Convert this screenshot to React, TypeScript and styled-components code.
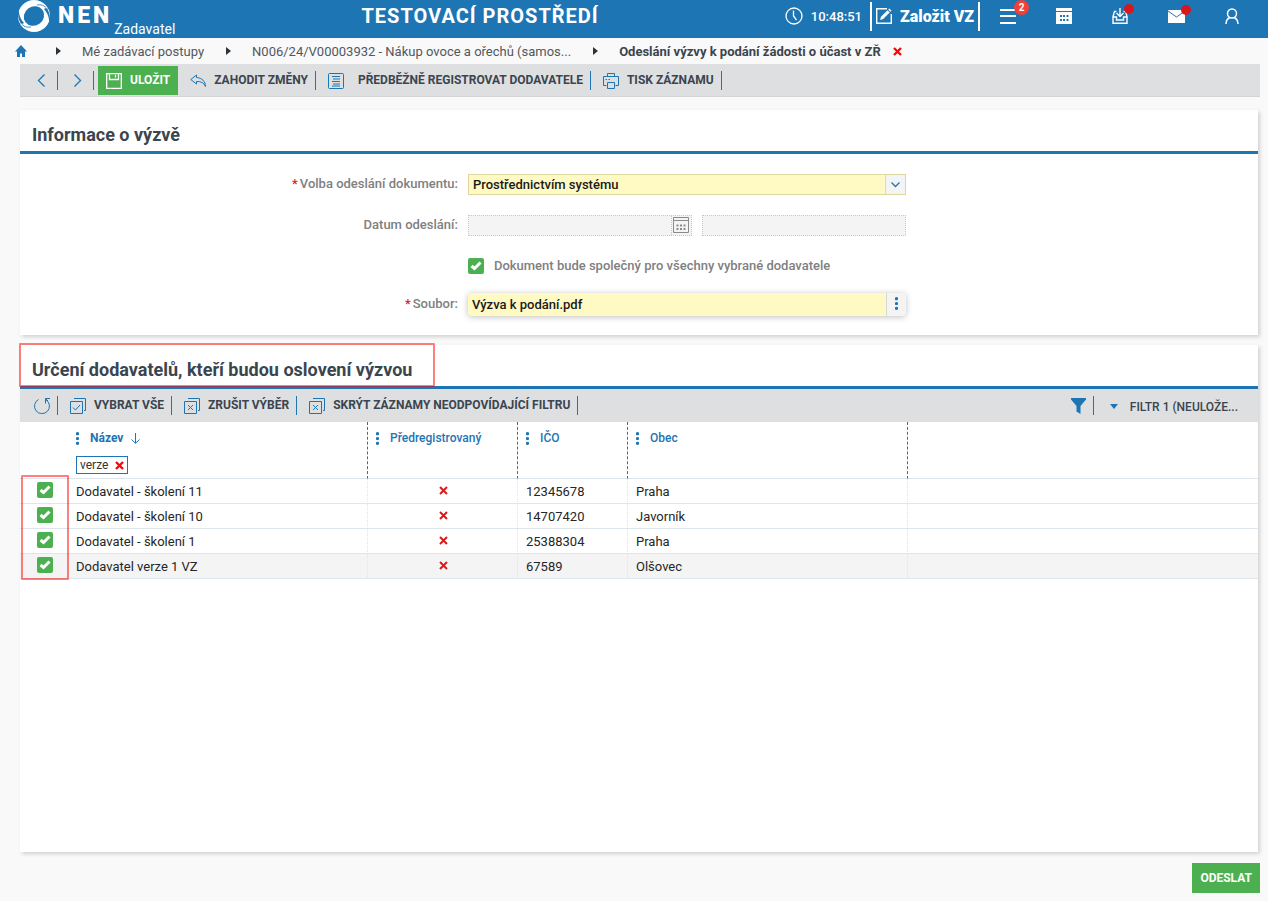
import React from "react";
import styled, { createGlobalStyle } from "styled-components";

const blue = "#1d75b4";
const green = "#4caf50";
const ink = "#3b454e";
const line = "#dde6ec";

const GlobalStyle = createGlobalStyle`
  *, *::before, *::after { box-sizing: border-box; }
  body { margin: 0; background: #f9f9f9; color: #333; font-family: Roboto, "Liberation Sans", sans-serif; font-size: 13px; }
  button, input, select { font-family: inherit; }
  svg { display: block; flex: none; }
`;

const Page = styled.div`
  display: flex;
  flex-direction: column;
  min-height: 100vh;
`;

/* ---------- top bar ---------- */

const TopBar = styled.header`
  display: flex;
  align-items: center;
  height: 38px;
  padding: 0 8px 6px 18px;
  background: ${blue};
  color: #fff;
`;

const Brand = styled.a`
  display: flex;
  align-items: center;
  gap: 8px;
  color: #fff;
  text-decoration: none;
`;

const BrandName = styled.span`
  font-size: 23px;
  font-weight: 900;
  line-height: 32px;
  letter-spacing: 3px;
`;

const BrandRole = styled.span`
  align-self: flex-end;
  margin: 0 0 -6px -6px;
  font-size: 14px;
  line-height: 17px;
`;

const EnvTitle = styled.h1`
  flex: 1;
  margin: 0;
  font-size: 20px;
  font-weight: 700;
  line-height: 32px;
  letter-spacing: 1px;
  text-align: center;
  white-space: nowrap;
`;

const Clock = styled.div`
  display: flex;
  align-items: center;
  gap: 8px;
  margin-right: 8px;
  font-size: 13px;
  font-weight: 500;
`;

const CreateButton = styled.button`
  display: flex;
  align-items: center;
  gap: 8px;
  height: 29px;
  padding: 0 4px;
  border: solid #fff;
  border-width: 0 2px;
  background: none;
  color: #fff;
  font-size: 16px;
  font-weight: 900;
  white-space: nowrap;
`;

const TopIcon = styled.button`
  display: flex;
  justify-content: center;
  width: 56px;
  padding: 0;
  border: 0;
  background: none;
  color: #fff;
`;

const IconHolder = styled.span`
  position: relative;
`;

const Badge = styled.span`
  position: absolute;
  top: -8px;
  left: 14px;
  width: 15px;
  height: 15px;
  border-radius: 50%;
  background: #f43f36;
  font-size: 10px;
  font-weight: 700;
  line-height: 15px;
  text-align: center;
`;

const Dot = styled.span`
  position: absolute;
  top: -4px;
  right: -6px;
  width: 10px;
  height: 10px;
  border-radius: 50%;
  background: #d9161c;
`;

/* ---------- breadcrumb ---------- */

const Crumbs = styled.nav`
  display: flex;
  align-items: center;
  gap: 21px;
  height: 26px;
  padding-left: 15px;
  color: #50585f;
  white-space: nowrap;
`;

const CrumbLink = styled.a`
  padding-right: 1px;
  color: inherit;
  text-decoration: none;
`;

const HomeLink = styled(CrumbLink)`
  margin-right: 7px;
  color: ${blue};
`;

const Current = styled.span`
  display: flex;
  align-items: center;
  gap: 12px;
  color: ${ink};
  font-weight: 700;
`;

const PlainButton = styled.button`
  display: flex;
  padding: 0;
  border: 0;
  background: none;
`;

/* ---------- toolbars ---------- */

const ToolBar = styled.div<{ $page?: boolean }>`
  display: flex;
  align-items: center;
  height: 33px;
  margin: ${(p) => (p.$page ? "0 8px 13px 20px" : "0")};
  padding: 1px 0 0 2px;
  border-bottom: 1px solid ${(p) => (p.$page ? "#d4d5d7" : "#dedfe1")};
  background: #dedfe1;
`;

const Tool = styled.button<{ $gap?: number }>`
  display: flex;
  align-items: center;
  gap: ${(p) => p.$gap ?? 8}px;
  height: 29px;
  padding: 0 7px 0 12px;
  border: 0;
  background: none;
  color: ${ink};
  font-size: 12px;
  font-weight: 700;
  white-space: nowrap;
`;

const NavTool = styled(Tool)`
  justify-content: center;
  width: 35px;
  padding: 0 0 0 4px;
`;

const SaveTool = styled(Tool)`
  margin-left: 4px;
  padding: 0 8px;
  background: ${green};
  color: #fff;
`;

const Label = styled.span`
  margin-bottom: 2px;
`;

const Divider = styled.span`
  width: 1px;
  height: 19px;
  background: ${blue};
`;

const FilterTools = styled.div`
  display: flex;
  align-items: center;
  margin-left: auto;
  padding-right: 13px;
`;

const FilterPick = styled(Tool)`
  gap: 12px;
  padding: 2px 7px 0 16px;
  font-weight: 500;
`;

/* ---------- panels ---------- */

const Panel = styled.section<{ $grow?: boolean }>`
  flex: ${(p) => (p.$grow ? "1" : "none")};
  margin: 0 10px ${(p) => (p.$grow ? 11 : 10)}px 20px;
  background: #fff;
  box-shadow: 2px 2px 4px rgba(0, 0, 0, 0.16);
`;

const PanelTitle = styled.h2`
  position: relative;
  margin: 0;
  padding: 13px 12px 4px;
  border-bottom: 3px solid ${blue};
  color: ${ink};
  font-size: 18px;
  font-weight: 700;
  line-height: 24px;
`;

const TitleMark = styled.span`
  position: absolute;
  top: -2px;
  left: -1px;
  width: 416px;
  height: 44px;
  border: 2px solid rgba(255, 0, 0, 0.5);
  border-radius: 1px;
`;

/* ---------- form ---------- */

const Form = styled.form`
  padding-bottom: 19px;
`;

const FormRow = styled.div<{ $gap?: number }>`
  display: grid;
  grid-template-columns: 32fr 32fr 25fr;
  column-gap: 10px;
  align-items: center;
  min-height: 21px;
  margin-top: ${(p) => p.$gap ?? 20}px;
`;

const FieldLabel = styled.label`
  padding-bottom: 2px;
  color: #808080;
  font-weight: 500;
  line-height: 19px;
  text-align: right;
`;

const Required = styled.span`
  margin-right: 2px;
  color: #e0201f;
`;

const SelectBox = styled.div`
  display: flex;
  height: 21px;
  border: 1px solid #dcd6a0;
  background: #fff9c4;
`;

const Select = styled.select`
  flex: 1;
  min-width: 0;
  padding: 0 4px;
  border: 0;
  appearance: none;
  background: none;
  color: #1a1a1a;
  font-size: 13px;
  font-weight: 500;
`;

const EndCap = styled.span`
  display: flex;
  align-items: center;
  justify-content: center;
  width: 20px;
  border-left: 1px solid #d8d8d8;
  background: #f4f4f4;
`;

const DateFields = styled.div`
  display: grid;
  grid-template-columns: 11fr 10fr;
  gap: 10px;
  height: 21px;
`;

const DateBox = styled.div`
  display: flex;
  border: 1px dotted #c8c8c8;
  background: #f4f4f4;
`;

const PlainInput = styled.input`
  flex: 1;
  min-width: 0;
  padding: 0 4px;
  border: 0;
  background: none;
  color: #1a1a1a;
  font-size: 13px;
  font-weight: 500;
`;

const TimeInput = styled(PlainInput)`
  border: 1px dotted #c8c8c8;
  background: #f4f4f4;
`;

const DateButton = styled(PlainButton)`
  align-items: center;
  padding: 0 2px 1px 1px;
  border-left: 1px dotted #c8c8c8;
`;

const CheckLabel = styled.label`
  display: flex;
  grid-column: 2;
  align-items: center;
  gap: 10px;
  padding-bottom: 2px;
  color: #808080;
  font-weight: 500;
`;

const Check = styled.input`
  width: 16px;
  height: 16px;
  margin: 0;
  border-radius: 2px;
  appearance: none;
  background: ${green};
`;

const CheckHolder = styled.span`
  display: grid;
  width: 16px;
  height: 16px;
  & > * { grid-area: 1 / 1; }
  & > svg { pointer-events: none; z-index: 1; }
`;

const FileBox = styled.div`
  display: flex;
  height: 23px;
  overflow: hidden;
  border-radius: 4px;
  background: #fff9c4;
  box-shadow: 0 1px 6px rgba(0, 0, 0, 0.25);
`;

const MoreButton = styled(PlainButton)`
  align-items: center;
  justify-content: center;
  width: 20px;
  padding-bottom: 2px;
  border-left: 1px solid #d8d8d8;
  background: #f4f4f4;
`;

/* ---------- table ---------- */

const TableArea = styled.div`
  position: relative;
`;

const Table = styled.table`
  width: 100%;
  table-layout: fixed;
  border-collapse: separate;
  border-spacing: 0;
`;

const HeadCell = styled.th<{ $edge?: boolean }>`
  height: 57px;
  padding: 8px 8px 4px;
  border-right: ${(p) => (p.$edge ? `1px dashed ${blue}` : "0")};
  border-bottom: 1px solid ${line};
  color: ${blue};
  font-size: 12px;
  font-weight: 500;
  line-height: 16px;
  text-align: left;
  vertical-align: top;
`;

const HeadLabel = styled.span<{ $sorted?: boolean }>`
  display: flex;
  align-items: center;
  gap: ${(p) => (p.$sorted ? 8 : 11)}px;
  font-weight: ${(p) => (p.$sorted ? 700 : 500)};
`;

const HeadText = styled.span<{ $sorted?: boolean }>`
  margin-left: ${(p) => (p.$sorted ? 3 : 0)}px;
`;

const Chip = styled.span`
  display: flex;
  align-items: center;
  gap: 7px;
  width: fit-content;
  height: 18px;
  margin-top: 10px;
  padding: 0 3px;
  border: 1px solid ${blue};
  color: #333;
  font-weight: 400;
`;

const Row = styled.tr<{ $active?: boolean }>`
  background: ${(p) => (p.$active ? "#f4f4f4" : "#fff")};
`;

const Cell = styled.td<{ $edge?: boolean }>`
  height: 25px;
  padding: 1px 8px 0;
  border-right: ${(p) => (p.$edge ? "1px dotted #dfe4e8" : "0")};
  border-bottom: 1px solid ${line};
  color: #262626;
  line-height: 16px;
`;

const CheckCell = styled(Cell)`
  padding: 0 0 2px 17px;
`;

const MarkCell = styled(Cell)`
  padding: 0 0 2px 2px;
  & > svg { margin: 0 auto; }
`;

const CheckMark = styled.span`
  position: absolute;
  top: 53px;
  left: 1px;
  width: 48px;
  height: 105px;
  border: 2px solid rgba(255, 0, 0, 0.5);
  border-radius: 1px;
  pointer-events: none;
`;

const Footer = styled.footer`
  display: flex;
  justify-content: flex-end;
  padding: 0 8px 8px;
`;

const SubmitButton = styled.button`
  height: 30px;
  padding: 0 8px;
  border: 0;
  background: ${green};
  color: #fff;
  font-size: 12px;
  font-weight: 700;
`;

/* ---------- drawings ---------- */

const Svg = ({ w = 16, h = 16, stroke = blue, sw = 1, children }: { w?: number; h?: number; stroke?: string; sw?: number; children: React.ReactNode }) => (
  <svg width={w} height={h} viewBox={`0 0 ${w} ${h}`} fill="none" stroke={stroke} strokeWidth={sw} aria-hidden="true">
    {children}
  </svg>
);

const Cross = ({ color = "#f80808", sw = 2.4 }) => (
  <Svg w={9} h={9} stroke={color} sw={sw}>
    <path d="M1 1L8 8M8 1L1 8" />
  </Svg>
);

const Dots = () => (
  <Svg w={3} h={13} stroke="none">
    <g fill={blue}>
      <circle cx="1.5" cy="1.7" r="1.6" />
      <circle cx="1.5" cy="6.5" r="1.6" />
      <circle cx="1.5" cy="11.3" r="1.6" />
    </g>
  </Svg>
);

const Tri = () => (
  <Svg w={5} h={8} stroke="none">
    <path d="M0 0L5 4L0 8Z" fill="#2c343b" />
  </Svg>
);

const Logo = () => (
  <Svg w={32} h={32} stroke="none">
    <circle cx="16" cy="16" r="16" fill="#fff" />
    <ellipse cx="16" cy="16" rx="10.5" ry="9.5" transform="rotate(-35 16 16)" fill={blue} />
    <path d="M.5 10C1.500 16 2.500 19 6 23L4 24C1 21 0 18 0 12ZM31.500 22C30.500 16 29.500 13 26 9L28 8C31 11 32 14 32 20Z" fill={blue} />
    <path d="M19 5C25 4 28 7 30 10M13 27C7 28 4 25 2 22" fill="none" stroke={blue} strokeWidth=".8" />
  </Svg>
);

const Copies = ({ tick }: { tick?: boolean }) => (
  <Svg>
    <path d="M.5 3.500H12.500V15.500H.5Z" />
    <path d="M4 .500H15.500V12.500H14" />
    <path d={tick ? "M3 9.500L5.500 12L10 7" : "M4 7L9 12M9 7L4 12"} />
  </Svg>
);

const CheckBox = ({ id, label }: { id: string; label?: string }) => (
  <CheckHolder>
    <Check type="checkbox" id={id} aria-label={label} defaultChecked />
    <Svg stroke="#fff" sw={3}>
      <path d="M3.500 8L6.500 10.500L12.500 4.500" />
    </Svg>
  </CheckHolder>
);

const suppliers = [
  { name: "Dodavatel - školení 11", ico: "12345678", city: "Praha" },
  { name: "Dodavatel - školení 10", ico: "14707420", city: "Javorník" },
  { name: "Dodavatel - školení 1", ico: "25388304", city: "Praha" },
  { name: "Dodavatel verze 1 VZ", ico: "67589", city: "Olšovec", active: true },
];

export default function App() {
  return (
    <Page>
      <GlobalStyle />
      <TopBar>
        <Brand href="#">
          <Logo />
          <BrandName>NEN</BrandName>
          <BrandRole>Zadavatel</BrandRole>
        </Brand>
        <EnvTitle>TESTOVACÍ PROSTŘEDÍ</EnvTitle>
        <Clock>
          <Svg w={18} h={18} stroke="#fff">
            <circle cx="9" cy="9" r="8" strokeWidth="1.300" />
            <path d="M8.500 3.500V9L11.500 13" strokeWidth="1.300" />
          </Svg>
          <time>10:48:51</time>
        </Clock>
        <CreateButton type="button">
          <Svg stroke="#fff">
            <path d="M11 .700H.700V15.300H15.300V6" strokeWidth="1.400" />
            <path d="M4 12L5 8.800L11.500 2.300L13.700 4.500L7.200 11ZM12.200 1.600L13.300 .500L15.500 2.700L14.400 3.800Z" fill="#fff" stroke="none" />
          </Svg>
          Založit VZ
        </CreateButton>
        <TopIcon type="button" aria-label="Nabídka">
          <IconHolder>
            <Svg stroke="#fff">
              <path d="M0 2H16M0 8H16M0 15H16" strokeWidth="1.800" />
            </Svg>
            <Badge>2</Badge>
          </IconHolder>
        </TopIcon>
        <TopIcon type="button" aria-label="Kalendář">
          <Svg stroke="none">
            <path d="M0 0H16V3H0ZM0 4H16V16H0Z" fill="#fff" />
            <path d="M4 7H6V9H4ZM7 7H9V9H7ZM10.500 7H12.500V9H10.500ZM4 11H6V13H4ZM7 11H9V13H7ZM10.500 11H12.500V13H10.500Z" fill={blue} />
          </Svg>
        </TopIcon>
        <TopIcon type="button" aria-label="Příchozí">
          <IconHolder>
            <Svg stroke="#fff" sw={1.4}>
              <path d="M4.500 3.500H2.500L1 8.500V15.200H15V8.500L13.500 3.500H11.500M1 9H4.500V12H11.500V9H15" />
              <path d="M8 0V8.500M4.500 5L8 8.500L11.500 5" />
            </Svg>
            <Dot />
          </IconHolder>
        </TopIcon>
        <TopIcon type="button" aria-label="Zprávy">
          <IconHolder>
            <Svg w={17} h={14} stroke="none">
              <path d="M0 1H17V14H0Z" fill="#fff" />
              <path d="M0 2L8.500 8L17 2" stroke={blue} />
            </Svg>
            <Dot />
          </IconHolder>
        </TopIcon>
        <TopIcon type="button" aria-label="Uživatel">
          <Svg w={14} h={16} stroke="#fff" sw={1.5}>
            <circle cx="7" cy="5.500" r="4.500" />
            <path d="M1 16C1 12.500 2.500 10.500 5 9.500M13 16C13 12.500 11.500 10.500 9 9.500" />
          </Svg>
        </TopIcon>
      </TopBar>

      <Crumbs aria-label="Cesta">
        <HomeLink href="#" aria-label="Domů">
          <Svg w={12} h={12} stroke="none">
            <path d="M6 0L12 6.500H10V12H7V8.500H5V12H2V6.500H0Z" fill={blue} />
          </Svg>
        </HomeLink>
        <Tri />
        <CrumbLink href="#">Mé zadávací postupy</CrumbLink>
        <Tri />
        <CrumbLink href="#">N006/24/V00003932 - Nákup ovoce a ořechů (samos...</CrumbLink>
        <Tri />
        <Current>
          Odeslání výzvy k podání žádosti o účast v ZŘ
          <PlainButton type="button" aria-label="Zavřít"><Cross /></PlainButton>
        </Current>
      </Crumbs>

      <ToolBar $page>
        <NavTool type="button" aria-label="Předchozí">
          <Svg w={9} h={13} sw={1.3}><path d="M7.500 .500L1.500 6.500L7.500 12.500" /></Svg>
        </NavTool>
        <Divider />
        <NavTool type="button" aria-label="Další">
          <Svg w={9} h={13} sw={1.3}><path d="M1.500 .500L7.500 6.500L1.500 12.500" /></Svg>
        </NavTool>
        <Divider />
        <SaveTool type="button">
          <Svg stroke="#fff" sw={1.3}>
            <path d="M.700 .700H15.300V15.300H.700Z" />
            <path d="M3.500 .500V6.500H12.500V.500M9.500 2V4.500" />
          </Svg>
          <Label>ULOŽIT</Label>
        </SaveTool>
        <Tool type="button">
          <Svg><path d="M6.500 2L.800 6.500L6.500 11V8.500C11 8.200 14 10 15.500 13.500C15.500 8.500 12 4.800 6.500 4.500Z" /></Svg>
          <Label>ZAHODIT ZMĚNY</Label>
        </Tool>
        <Divider />
        <Tool type="button" $gap={14}>
          <Svg>
            <rect x=".5" y=".5" width="15" height="15" rx="1" />
            <path d="M4 3.500H12M5 6H12M4 8.500H12M5 11H12M4 13H12" />
          </Svg>
          <Label>PŘEDBĚŽNĚ REGISTROVAT DODAVATELE</Label>
        </Tool>
        <Divider />
        <Tool type="button">
          <Svg>
            <path d="M4.500 3.500V.500H11.500V3.500M3.500 12.500H.500V3.500H15.500V12.500H12.500" />
            <path d="M4.500 9.500H11.500V15.500H4.500ZM2.500 6.500H4M5.500 6.500H7" />
          </Svg>
          <Label>TISK ZÁZNAMU</Label>
        </Tool>
        <Divider />
      </ToolBar>

      <Panel>
        <PanelTitle>Informace o výzvě</PanelTitle>
        <Form onSubmit={(e) => e.preventDefault()}>
          <FormRow>
            <FieldLabel htmlFor="mode"><Required>*</Required>Volba odeslání dokumentu:</FieldLabel>
            <SelectBox>
              <Select id="mode"><option>Prostřednictvím systému</option></Select>
              <EndCap><Svg w={9} h={6} sw={1.3}><path d="M.500 .500L4.500 4.500L8.500 .500" /></Svg></EndCap>
            </SelectBox>
          </FormRow>
          <FormRow>
            <FieldLabel htmlFor="date">Datum odeslání:</FieldLabel>
            <DateFields>
              <DateBox>
                <PlainInput id="date" disabled />
                <DateButton type="button" aria-label="Vybrat datum" disabled>
                  <Svg stroke="#8a8a8a">
                    <path d="M.500 .500H15.500V15.500H.500ZM.500 3.500H15.500" />
                    <path d="M3.500 8.500H13M3.500 12H13" strokeWidth="2" strokeDasharray="2 1.500" />
                  </Svg>
                </DateButton>
              </DateBox>
              <TimeInput aria-label="Čas odeslání" disabled />
            </DateFields>
          </FormRow>
          <FormRow>
            <CheckLabel>
              <CheckBox id="shared" />
              Dokument bude společný pro všechny vybrané dodavatele
            </CheckLabel>
          </FormRow>
          <FormRow $gap={16}>
            <FieldLabel htmlFor="file"><Required>*</Required>Soubor:</FieldLabel>
            <FileBox>
              <PlainInput id="file" defaultValue="Výzva k podání.pdf" />
              <MoreButton type="button" aria-label="Možnosti souboru"><Dots /></MoreButton>
            </FileBox>
          </FormRow>
        </Form>
      </Panel>

      <Panel $grow>
        <PanelTitle>
          Určení dodavatelů, kteří budou oslovení výzvou
          <TitleMark />
        </PanelTitle>
        <ToolBar>
          <NavTool type="button" aria-label="Obnovit">
            <Svg><path d="M4.500 1.500A7.500 7.500 0 1 0 12 1.800M16 .500H11.500V5.500M11.500 .500L14 3" /></Svg>
          </NavTool>
          <Divider />
          <Tool type="button"><Copies tick /><Label>VYBRAT VŠE</Label></Tool>
          <Divider />
          <Tool type="button"><Copies /><Label>ZRUŠIT VÝBĚR</Label></Tool>
          <Divider />
          <Tool type="button"><Copies /><Label>SKRÝT ZÁZNAMY NEODPOVÍDAJÍCÍ FILTRU</Label></Tool>
          <Divider />
          <FilterTools>
            <Tool type="button" aria-label="Filtr">
              <Svg w={15} h={16} stroke="none"><path d="M0 0H15V1.500L9.500 8V16L5.500 13.500V8L0 1.500Z" fill={blue} /></Svg>
            </Tool>
            <Divider />
            <FilterPick type="button">
              <Svg w={8} h={5} stroke="none"><path d="M0 0H8L4 5Z" fill={blue} /></Svg>
              FILTR 1 (NEULOŽE...
            </FilterPick>
          </FilterTools>
        </ToolBar>
        <TableArea>
          <Table>
            <colgroup>
              <col width="48" />
              <col width="300" />
              <col width="150" />
              <col width="110" />
              <col width="280" />
              <col />
            </colgroup>
            <thead>
              <tr>
                <HeadCell aria-label="Výběr" />
                <HeadCell $edge>
                  <HeadLabel $sorted>
                    <Dots />
                    <HeadText $sorted>Název</HeadText>
                    <Svg w={9} h={11}><path d="M4.500 0V10M.500 6.500L4.500 10.300L8.500 6.500" /></Svg>
                  </HeadLabel>
                  <Chip>verze <PlainButton type="button" aria-label="Odebrat filtr"><Cross /></PlainButton></Chip>
                </HeadCell>
                <HeadCell $edge><HeadLabel><Dots /><HeadText>Předregistrovaný</HeadText></HeadLabel></HeadCell>
                <HeadCell $edge><HeadLabel><Dots /><HeadText>IČO</HeadText></HeadLabel></HeadCell>
                <HeadCell $edge><HeadLabel><Dots /><HeadText>Obec</HeadText></HeadLabel></HeadCell>
                <HeadCell aria-hidden="true" />
              </tr>
            </thead>
            <tbody>
              {suppliers.map((s, i) => (
                <Row key={s.ico} $active={s.active}>
                  <CheckCell><CheckBox id={`row-${i}`} label={s.name} /></CheckCell>
                  <Cell $edge>{s.name}</Cell>
                  <MarkCell $edge aria-label="Ne"><Cross color="#dc1a1e" sw={2} /></MarkCell>
                  <Cell $edge>{s.ico}</Cell>
                  <Cell $edge>{s.city}</Cell>
                  <Cell />
                </Row>
              ))}
            </tbody>
          </Table>
          <CheckMark />
        </TableArea>
      </Panel>

      <Footer>
        <SubmitButton type="submit">ODESLAT</SubmitButton>
      </Footer>
    </Page>
  );
}
